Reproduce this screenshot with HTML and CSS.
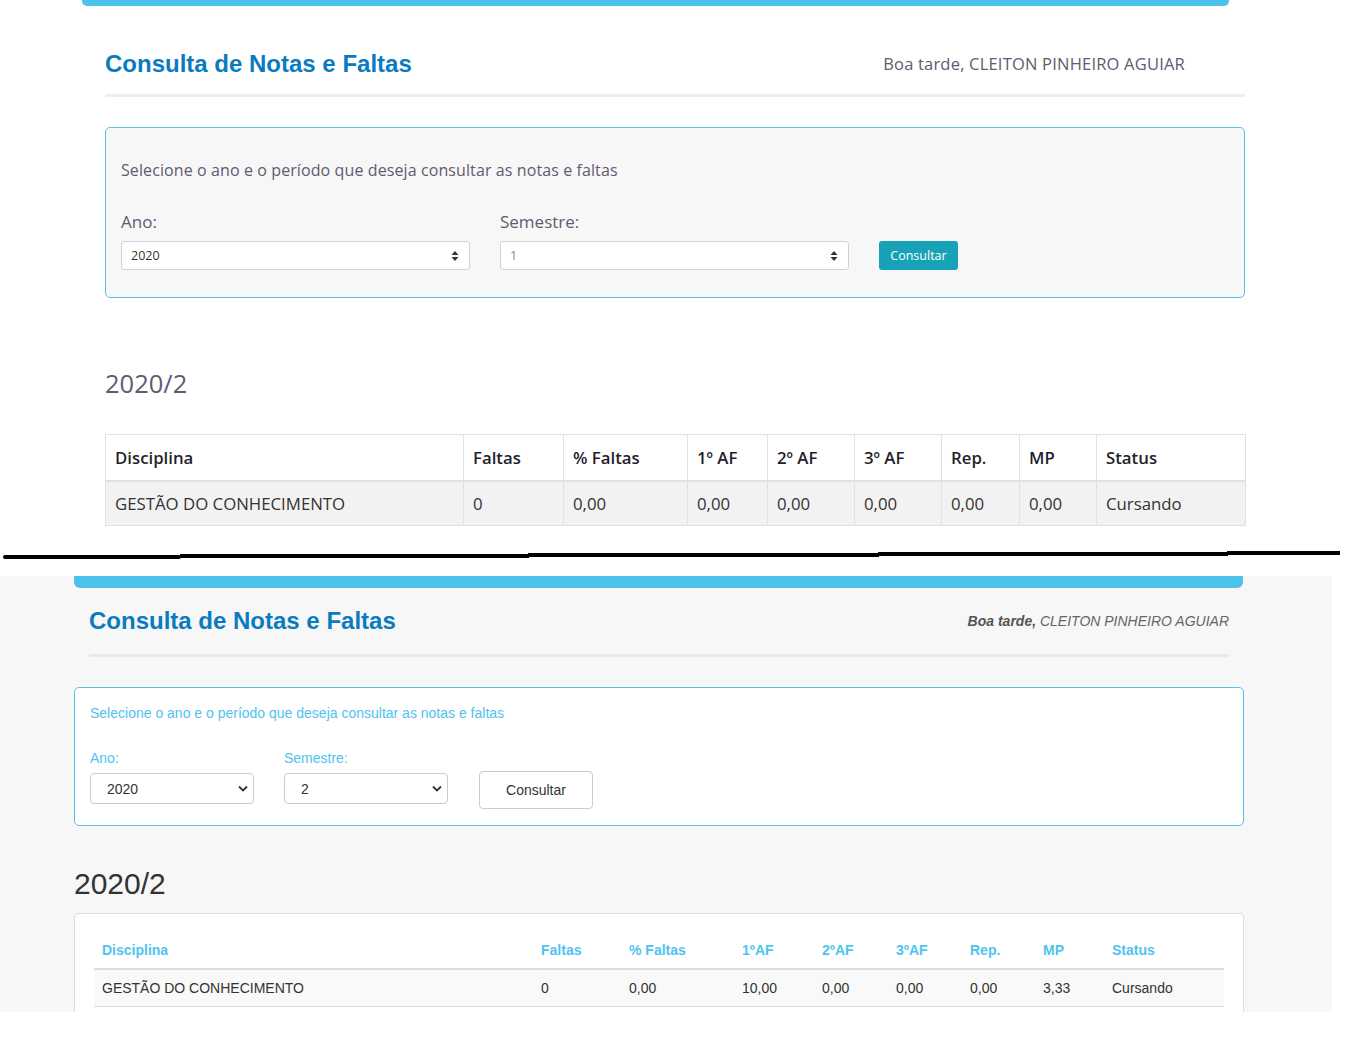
FILE: index.html
```html
<!DOCTYPE html>
<html lang="pt-BR">
<head>
<meta charset="utf-8">
<title>Consulta de Notas e Faltas</title>
<link rel="stylesheet" href="styles.css">
</head>
<body>
<section class="v1">
  <div class="v1-bar"></div>
  <div class="v1-wrap">
    <header class="v1-head">
      <h1 class="title">Consulta de Notas e Faltas</h1>
      <p class="v1-greet">Boa tarde, CLEITON PINHEIRO AGUIAR</p>
    </header>
    <div class="v1-box">
      <p class="v1-intro">Selecione o ano e o período que deseja consultar as notas e faltas</p>
      <div class="v1-form">
        <div class="v1-field">
          <label class="v1-label">Ano:</label>
          <div class="v1-select"><span>2020</span>
            <svg width="8" height="12" viewBox="0 0 8 12"><path d="M4 1 L7.5 5 H0.5 Z M4 11 L7.5 7 H0.5 Z" fill="#333"/></svg>
          </div>
        </div>
        <div class="v1-field">
          <label class="v1-label">Semestre:</label>
          <div class="v1-select"><span class="muted">1</span>
            <svg width="8" height="12" viewBox="0 0 8 12"><path d="M4 1 L7.5 5 H0.5 Z M4 11 L7.5 7 H0.5 Z" fill="#333"/></svg>
          </div>
        </div>
        <button class="v1-btn">Consultar</button>
      </div>
    </div>
    <h2 class="v1-period">2020/2</h2>
    <table class="v1-table">
      <colgroup>
        <col class="a1"><col class="a2"><col class="a3"><col class="a4"><col class="a5"><col class="a6"><col class="a7"><col class="a8"><col class="a9">
      </colgroup>
      <thead>
        <tr><th>Disciplina</th><th>Faltas</th><th>% Faltas</th><th>1º AF</th><th>2º AF</th><th>3º AF</th><th>Rep.</th><th>MP</th><th>Status</th></tr>
      </thead>
      <tbody>
        <tr><td>GESTÃO DO CONHECIMENTO</td><td>0</td><td>0,00</td><td>0,00</td><td>0,00</td><td>0,00</td><td>0,00</td><td>0,00</td><td>Cursando</td></tr>
      </tbody>
    </table>
  </div>
</section>

<div class="divider">
  <svg width="1348" height="50" viewBox="0 0 1348 50">
    <rect x="3" y="29" width="178" height="4" rx="2" fill="#000"/>
    <rect x="180" y="28" width="349" height="4" fill="#000"/>
    <rect x="528" y="27" width="351" height="4" fill="#000"/>
    <rect x="878" y="26" width="350" height="4" fill="#000"/>
    <rect x="1227" y="25" width="113" height="4" fill="#000"/>
  </svg>
</div>

<section class="v2">
  <div class="v2-bar"></div>
  <div class="v2-wrap">
    <header class="v2-head">
      <h1 class="title">Consulta de Notas e Faltas</h1>
      <p class="v2-greet"><b>Boa tarde,</b> CLEITON PINHEIRO AGUIAR</p>
    </header>
  </div>
  <div class="v2-main">
    <div class="v2-box">
      <p class="v2-intro">Selecione o ano e o período que deseja consultar as notas e faltas</p>
      <div class="v2-form">
        <div class="v2-field">
          <label class="v2-label">Ano:</label>
          <div class="v2-select"><span>2020</span>
            <svg width="10" height="7" viewBox="0 0 10 7"><path d="M1 1.5 L5 5.5 L9 1.5" fill="none" stroke="#333" stroke-width="1.8"/></svg>
          </div>
        </div>
        <div class="v2-field">
          <label class="v2-label">Semestre:</label>
          <div class="v2-select"><span>2</span>
            <svg width="10" height="7" viewBox="0 0 10 7"><path d="M1 1.5 L5 5.5 L9 1.5" fill="none" stroke="#333" stroke-width="1.8"/></svg>
          </div>
        </div>
        <button class="v2-btn">Consultar</button>
      </div>
    </div>
    <h2 class="v2-period">2020/2</h2>
    <div class="v2-card">
      <table class="v2-table">
        <colgroup>
          <col class="b1"><col class="b2"><col class="b3"><col class="b4"><col class="b5"><col class="b6"><col class="b7"><col class="b8"><col class="b9">
        </colgroup>
        <thead>
          <tr><th>Disciplina</th><th>Faltas</th><th>% Faltas</th><th>1ºAF</th><th>2ºAF</th><th>3ºAF</th><th>Rep.</th><th>MP</th><th>Status</th></tr>
        </thead>
        <tbody>
          <tr><td>GESTÃO DO CONHECIMENTO</td><td>0</td><td>0,00</td><td>10,00</td><td>0,00</td><td>0,00</td><td>0,00</td><td>3,33</td><td>Cursando</td></tr>
        </tbody>
      </table>
    </div>
  </div>
</section>
</body>
</html>
```

FILE: styles.css
```css
* { box-sizing: border-box; }
html, body { margin: 0; padding: 0; background: #fff; }
body { font-family: "Liberation Sans", Arial, sans-serif; color: #333; }
p, h1, h2 { margin: 0; }

.title {
  font-family: "Liberation Sans", Arial, sans-serif;
  font-size: 24px;
  line-height: 28px;
  font-weight: bold;
  color: #0b7bc1;
}

/* ---------- version 1 ---------- */
.v1 { height: 526px; }
.v1-bar {
  margin-left: 82px;
  width: 1147px;
  height: 6px;
  background: #4bc2ec;
  border-radius: 0 0 5px 5px;
}
.v1-wrap {
  margin-left: 105px;
  width: 1140px;
  font-family: "Open Sans", sans-serif;
  color: #5f5b70;
}
.v1-head {
  display: flex;
  justify-content: space-between;
  align-items: center;
  padding: 44px 0 16px;
  border-bottom: 3px solid #eeeeee;
}
.v1-greet {
  font-size: 16.5px;
  letter-spacing: 0.2px;
  line-height: 28px;
  padding-right: 60px;
  color: #5f5b70;
}
.v1-box {
  margin-top: 30px;
  height: 171px;
  border: 1px solid #5bc1e4;
  border-radius: 5px;
  background: #f7f7f7;
  padding: 32px 15px 0;
}
.v1-intro { font-size: 16px; letter-spacing: 0.1px; line-height: 20px; }
.v1-form {
  display: flex;
  align-items: flex-end;
  gap: 30px;
  margin-top: 30px;
}
.v1-field { width: 349px; display: flex; flex-direction: column; }
.v1-label { font-size: 17px; line-height: 24px; margin-bottom: 7px; }
.v1-select {
  height: 29px;
  background: #fff;
  border: 1px solid #ced4da;
  border-radius: 3px;
  display: flex;
  align-items: center;
  justify-content: space-between;
  padding: 0 10px 0 9px;
  font-size: 12.5px;
  color: #333;
}
.v1-select .muted { color: #888; }
.v1-btn {
  width: 79px;
  height: 29px;
  border: 0;
  border-radius: 3px;
  background: #17a2b8;
  color: #fff;
  font-family: "Open Sans", sans-serif;
  font-size: 12.5px;
  padding: 0;
}
.v1-period {
  margin-top: 69px;
  font-size: 25.5px;
  line-height: 32px;
  font-weight: normal;
  color: #5f5b70;
}
.v1-table {
  margin-top: 35px;
  width: 1140px;
  border-collapse: collapse;
  table-layout: fixed;
  font-size: 16.8px;
}
.v1-table th, .v1-table td {
  border: 1px solid #dee2e6;
  text-align: left;
  padding: 0 9px;
  height: 46px;
}
.v1-table th { font-weight: 600; color: #1f1f2b; border-bottom: 2px solid #dee2e6; }
.v1-table td { background: #f2f2f2; color: #333; height: 45px; }
.a1 { width: 358px; } .a2 { width: 100px; } .a3 { width: 124px; }
.a4 { width: 80px; } .a5 { width: 87px; } .a6 { width: 87px; }
.a7 { width: 78px; } .a8 { width: 77px; } .a9 { width: 149px; }

/* ---------- divider ---------- */
.divider { height: 50px; }
.divider svg { display: block; }

/* ---------- version 2 ---------- */
.v2 {
  width: 1332px;
  height: 436px;
  overflow: hidden;
  background: #f7f7f7;
}
.v2-bar {
  margin-left: 74px;
  width: 1169px;
  height: 12px;
  background: #4bc2ec;
  border-radius: 0 0 6px 6px;
}
.v2-wrap { margin-left: 89px; width: 1140px; }
.v2-head {
  display: flex;
  justify-content: space-between;
  align-items: center;
  padding: 19px 0 19px;
  border-bottom: 3px solid #e9e9e9;
}
.v2-greet { font-size: 14px; font-style: italic; color: #666; line-height: 28px; }
.v2-greet b { color: #555; }
.v2-main { margin-left: 74px; width: 1170px; }
.v2-box {
  margin-top: 30px;
  height: 139px;
  background: #fff;
  border: 1px solid #5bc1e4;
  border-radius: 5px;
  padding: 15px 15px 0;
}
.v2-intro { font-size: 14px; line-height: 20px; color: #4fc3ef; }
.v2-form {
  display: flex;
  align-items: flex-end;
  gap: 30px;
  margin-top: 25px;
}
.v2-field { width: 164px; display: flex; flex-direction: column; margin-bottom: 5px; }
.v2-label { font-size: 14px; line-height: 20px; color: #4fc3ef; margin-bottom: 5px; }
.v2-select {
  height: 31px;
  border: 1px solid #ccc;
  border-radius: 4px;
  background: #fff;
  display: flex;
  align-items: center;
  justify-content: space-between;
  padding: 0 5px 0 16px;
  font-size: 14px;
  color: #333;
}
.v2-btn {
  width: 114px;
  height: 38px;
  margin-left: 1px;
  background: #fff;
  border: 1px solid #ccc;
  border-radius: 4px;
  font-family: "Liberation Sans", Arial, sans-serif;
  font-size: 14px;
  color: #333;
  padding: 0;
}
.v2-period {
  margin-top: 40px;
  font-size: 30px;
  line-height: 36px;
  font-weight: normal;
  color: #333;
}
.v2-card {
  margin-top: 11px;
  height: 140px;
  background: #fff;
  border: 1px solid #ddd;
  border-radius: 4px;
  padding: 18px 19px 0;
}
.v2-table {
  width: 1130px;
  border-collapse: collapse;
  table-layout: fixed;
  font-size: 14px;
}
.v2-table th, .v2-table td {
  text-align: left;
  padding: 8px;
  line-height: 20px;
}
.v2-table th { color: #4fc3ef; font-weight: bold; border-bottom: 2px solid #ddd; }
.v2-table td { background: #f9f9f9; color: #333; border-bottom: 1px solid #ddd; }
.b1 { width: 439px; } .b2 { width: 88px; } .b3 { width: 113px; }
.b4 { width: 80px; } .b5 { width: 74px; } .b6 { width: 74px; }
.b7 { width: 73px; } .b8 { width: 69px; } .b9 { width: 120px; }
```
